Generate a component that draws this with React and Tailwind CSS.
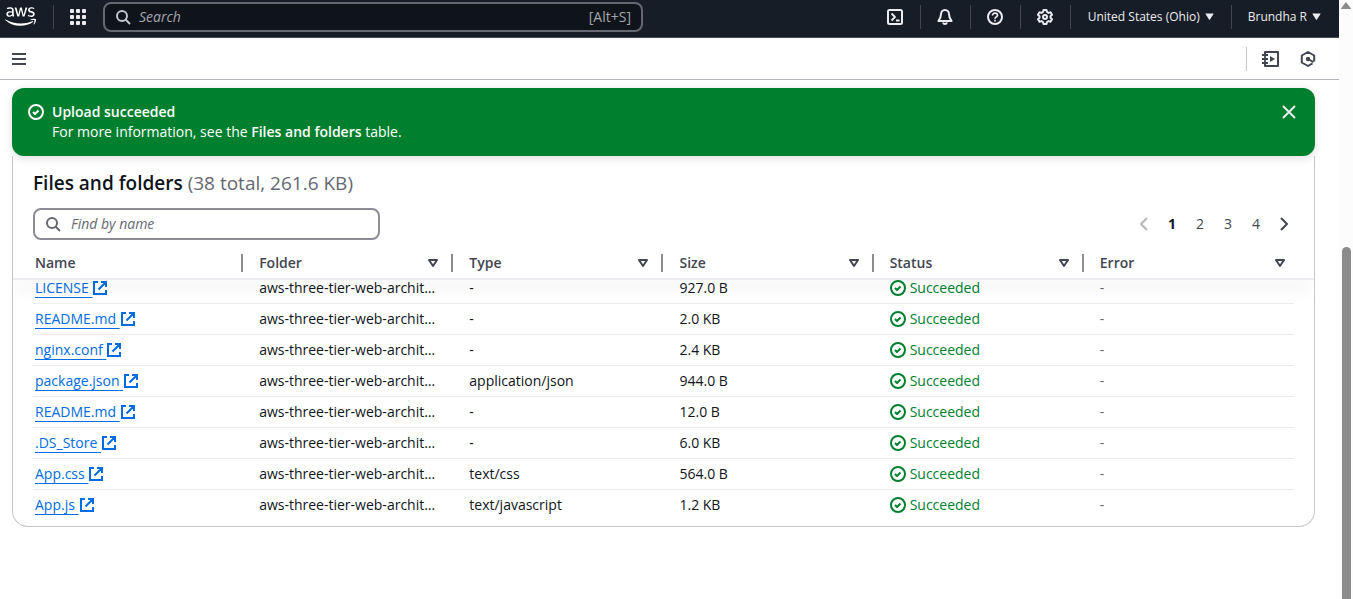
import { FaAws } from "react-icons/fa";

const FILES = [
  { name: "LICENSE", type: "-", size: "927.0 B" },
  { name: "README.md", type: "-", size: "2.0 KB" },
  { name: "nginx.conf", type: "-", size: "2.4 KB" },
  { name: "package.json", type: "application/json", size: "944.0 B" },
  { name: "README.md", type: "-", size: "12.0 B" },
  { name: ".DS_Store", type: "-", size: "6.0 KB" },
  { name: "App.css", type: "text/css", size: "564.0 B" },
  { name: "App.js", type: "text/javascript", size: "1.2 KB" },
];

const COLUMNS = ["Name", "Folder", "Type", "Size", "Status", "Error"];

function Icon({ className = "size-4", children }) {
  return (
    <svg viewBox="0 0 16 16" aria-hidden="true" fill="none" stroke="currentColor" strokeWidth="2" strokeLinejoin="round" className={`shrink-0 ${className}`}>
      {children}
    </svg>
  );
}

function SearchIcon() {
  return (
    <Icon>
      <circle cx="7" cy="7" r="5" />
      <path d="m15 15-4.5-4.5" />
    </Icon>
  );
}

function CheckIcon() {
  return (
    <Icon>
      <circle cx="8" cy="8" r="7" />
      <path d="m5 8 2 2 3.5-3.5" />
    </Icon>
  );
}

function Caret() {
  return (
    <svg viewBox="0 0 9 7" aria-hidden="true" fill="currentColor" className="h-[7px] w-[9px] shrink-0">
      <path d="M.8.5h7.400q.6 0 .3.600L5 6.500q-.5.600-1 0L.5 1.100Q.2.500.8.500z" />
    </svg>
  );
}

function Divider() {
  return <span className="h-6 w-px shrink-0 bg-[#424650]" />;
}

function TopButton({ label, children }) {
  return (
    <button type="button" aria-label={label} className="flex h-6 w-[49px] items-center justify-center">
      {children}
    </button>
  );
}

function TopBar() {
  return (
    <header className="flex h-[38px] items-center border-b border-[#424650] bg-[#161d26] pb-1 text-[#ebebf0]">
      <a href="#home" aria-label="AWS home" className="flex w-[53px] shrink-0 pl-[5px] text-white">
        <FaAws className="h-[25px] w-[31px]" />
      </a>
      <Divider />
      <button type="button" aria-label="Services" className="flex w-[49px] shrink-0 justify-center pr-[2px]">
        <svg viewBox="0 0 16 16" className="size-4" fill="currentColor" aria-hidden="true">
          {[0, 6, 12].map((y) => [0, 6, 12].map((x) => <rect key={`${x}-${y}`} x={x} y={y} width="4" height="4" rx="1" />))}
        </svg>
      </button>
      <label className="flex h-[30px] w-[540px] items-center gap-2 rounded-lg border-2 border-[#656871] bg-[#0f141a] px-[10px] text-sm text-[#c6c6cd]">
        <SearchIcon />
        <input type="search" aria-label="Search" placeholder="Search" className="min-w-0 flex-1 bg-transparent outline-none placeholder:text-[#a4a4ad] placeholder:italic" />
        <span className="text-[#a4a4ad]">[Alt+S]</span>
      </label>
      <div className="ml-auto flex items-center pr-[18px]">
        <TopButton label="CloudShell">
          <Icon>
            <rect x="1" y="1" width="14" height="14" rx="1.5" />
            <path d="m4.5 4.500 3.500 3.500-3.500 3.500M9 11.500h3.500" strokeWidth="1.800" />
          </Icon>
        </TopButton>
        <Divider />
        <TopButton label="Notifications">
          <Icon>
            <path d="M8 1C5.500 1 4 3 4 5.200c0 3-.8 4.300-2.600 6.800h13.200C12.800 9.500 12 8.200 12 5.200 12 3 10.500 1 8 1z" />
            <path d="M6 13.500c.3 1 1 1.500 2 1.500s1.700-.5 2-1.500" />
          </Icon>
        </TopButton>
        <Divider />
        <TopButton label="Help">
          <Icon>
            <circle cx="8" cy="8" r="7" />
            <path d="M5.500 6.500c0-1.500 1-2.300 2.500-2.300s2.500.8 2.500 2.100c0 1.700-2.500 1.700-2.500 3.500M8 10.800v1.700" strokeWidth="1.700" />
          </Icon>
        </TopButton>
        <Divider />
        <TopButton label="Settings">
          <Icon>
            <circle cx="8" cy="8" r="2" />
            <path d="M6.500 1h3l.5 2 1.500.9 2-.6 1.500 2.500L13.500 7.200v1.600l1.500 1.400-1.500 2.500-2-.6L10 13l-.5 2h-3L6 13l-1.500-.9-2 .6L1 10.200l1.500-1.400V7.200L1 5.800l1.500-2.500 2 .6L6 3z" />
          </Icon>
        </TopButton>
        <Divider />
        <button type="button" className="flex items-center gap-[5px] px-[17px] text-xs font-medium">
          United States (Ohio)
          <Caret />
        </button>
        <Divider />
        <button type="button" className="flex items-center gap-[5px] pl-4 text-xs font-medium">
          Brundha R
          <Caret />
        </button>
      </div>
    </header>
  );
}

function ToolBar() {
  return (
    <div className="flex h-[42px] items-center border-b border-[#b4b4bb] pr-[23px] pl-3 text-[#424650]">
      <button type="button" aria-label="Open navigation">
        <svg viewBox="0 0 14 12" className="h-3 w-[14px]" fill="currentColor" aria-hidden="true">
          <path d="M0 0h14v2H0zM0 5h14v2H0zM0 10h14v2H0z" />
        </svg>
      </button>
      <span className="ml-auto h-6 w-px bg-[#c6c6cd]" />
      <button type="button" aria-label="Tutorials" className="ml-[15px]">
        <svg viewBox="0 0 18 16" className="h-4 w-[18px]" fill="none" stroke="currentColor" strokeWidth="2" strokeLinejoin="round" aria-hidden="true">
          <path d="M3 3V1h13v14H3v-2" />
          <path d="M3 3v10M0 4h6M0 8h6M0 12h6" strokeWidth="1.800" />
          <path d="M8 5v6l5-3z" fill="currentColor" stroke="none" />
        </svg>
      </button>
      <button type="button" aria-label="Resource info" className="ml-5">
        <Icon>
          <path d="M12.500 12.400 8 15l-6.200-3.500v-7L8 1l6.200 3.500v6" />
          <circle cx="8" cy="8" r="2.200" fill="currentColor" stroke="none" />
          <path d="m8 8 5.500 3.200" />
        </Icon>
      </button>
    </div>
  );
}

function SuccessBanner() {
  return (
    <div role="status" className="relative z-10 flex items-start gap-2 rounded-xl bg-[#00802f] px-4 py-[14px] text-sm leading-5 text-white shadow-[0_2px_8px_rgba(0,7,22,0.14)]">
      <span className="mt-[2px]">
        <CheckIcon />
      </span>
      <div className="flex-1">
        <p className="font-semibold">Upload succeeded</p>
        <p>
          For more information, see the <strong className="font-semibold">Files and folders</strong> table.
        </p>
      </div>
      <button type="button" aria-label="Close" className="mt-[2px] mr-[2px] text-[#ebebf0]">
        <Icon>
          <path d="m2 2 12 12M14 2 2 14" />
        </Icon>
      </button>
    </div>
  );
}

function Pagination() {
  return (
    <nav aria-label="Table pages" className="flex text-sm text-[#424650]">
      <button type="button" aria-label="Previous page" disabled className="flex w-7 items-center justify-center text-[#b4b4bb]">
        <Icon>
          <path d="m11 2-6 6 6 6" />
        </Icon>
      </button>
      {[1, 2, 3, 4].map((page) => (
        <button key={page} type="button" className={page === 1 ? "w-7 font-bold text-[#0f141a]" : "w-7"}>
          {page}
        </button>
      ))}
      <button type="button" aria-label="Next page" className="flex w-7 items-center justify-center">
        <Icon>
          <path d="m5 2 6 6-6 6" />
        </Icon>
      </button>
    </nav>
  );
}

function FilesTable() {
  return (
    <div className="relative px-5 pb-[5px]">
      <table className="w-full table-fixed border-separate border-spacing-0 text-left text-sm leading-5">
        <thead>
          <tr className="h-[30px] text-[#424650]">
            {COLUMNS.map((column, i) => (
              <th key={column} scope="col" className={i === 0 ? "p-0 pl-[2px] font-semibold" : "p-0 pl-4 font-semibold"}>
                <div className="flex items-center">
                  {column}
                  {i > 0 && (
                    <button type="button" aria-label={`Sort by ${column}`} className={i === 5 ? "ml-auto mr-[6px]" : "ml-auto"}>
                      <Icon>
                        <path d="M4 5h8l-4 6z" />
                      </Icon>
                    </button>
                  )}
                  {i < 5 && <span className={i === 0 ? "ml-auto h-[18px] w-[2px] bg-[#8c8c94]" : "ml-[10px] h-[18px] w-[2px] bg-[#8c8c94]"} />}
                </div>
              </th>
            ))}
          </tr>
        </thead>
        <tbody className="text-[#0f141a] [&_td]:border-b [&_td]:border-[#ebebf0] [&_td]:py-[5px] [&_td]:pl-4 [&_td:first-child]:pl-[2px] [&_tr:first-child_td]:pt-0 [&_tr:last-child_td]:border-transparent">
          {FILES.map((file, i) => (
            <tr key={i}>
              <td>
                <a href={`#file-${i}`} className="flex items-center text-[#006ce0]">
                  <span className="underline underline-offset-4">{file.name}&nbsp;</span>
                  <Icon>
                    <path d="M9 2h5v5M6.500 9.500 14 2M14 10v4H2V2h4" strokeLinejoin="miter" />
                  </Icon>
                </a>
              </td>
              <td>
                <div className="mr-4 truncate">aws-three-tier-web-archit…</div>
              </td>
              <td>{file.type}</td>
              <td>{file.size}</td>
              <td>
                <span className="flex items-center gap-1 text-[#00802f]">
                  <CheckIcon />
                  Succeeded
                </span>
              </td>
              <td className="text-[#656871]">-</td>
            </tr>
          ))}
        </tbody>
      </table>
      <span className="pointer-events-none absolute inset-x-0 top-[30px] h-[2px] bg-[#ebebf0] shadow-[0_6px_16px_rgba(0,7,22,0.24)] [clip-path:inset(0_0_-30px_0)]" />
    </div>
  );
}

export default function App() {
  return (
    <div className="flex min-h-screen bg-white font-['Open_Sans','Noto_Sans',sans-serif]">
      <div className="min-w-0 flex-1">
        <TopBar />
        <ToolBar />
        <main className="mt-2 mr-6 ml-3">
          <SuccessBanner />
          <section aria-labelledby="files-title" className="rounded-b-2xl border border-t-0 border-[#c6c6cd]">
            <div className="px-5 pt-[15px]">
              <h2 id="files-title" className="text-[19px] leading-6 font-semibold text-[#0f141a]">
                Files and folders <span className="font-normal text-[#656871]">(38 total, 261.6 KB)</span>
              </h2>
            </div>
            <div className="mt-[13px] mb-2 flex items-center justify-between pr-4 pl-5">
              <label className="flex h-8 w-[347px] items-center gap-[10px] rounded-lg border-2 border-[#8c8c94] px-[10px] text-[#656871]">
                <SearchIcon />
                <input type="search" aria-label="Find by name" placeholder="Find by name" className="min-w-0 flex-1 bg-transparent text-sm outline-none placeholder:text-[#656871] placeholder:italic" />
              </label>
              <Pagination />
            </div>
            <FilesTable />
          </section>
        </main>
      </div>
      <div aria-hidden="true" className="flex w-[14px] shrink-0 flex-col items-center bg-[#fcfcfc] pt-[2px]">
        <svg viewBox="0 0 10 8" className="h-2 w-[10px]" fill="#8b8b8b">
          <path d="M5 0 10 6.500Q10 7 9.500 7H.5Q0 7 0 6.500z" />
        </svg>
        <span className="mt-[237px] w-[9px] flex-1 rounded-t-full bg-[#8b8b8b]" />
      </div>
    </div>
  );
}
